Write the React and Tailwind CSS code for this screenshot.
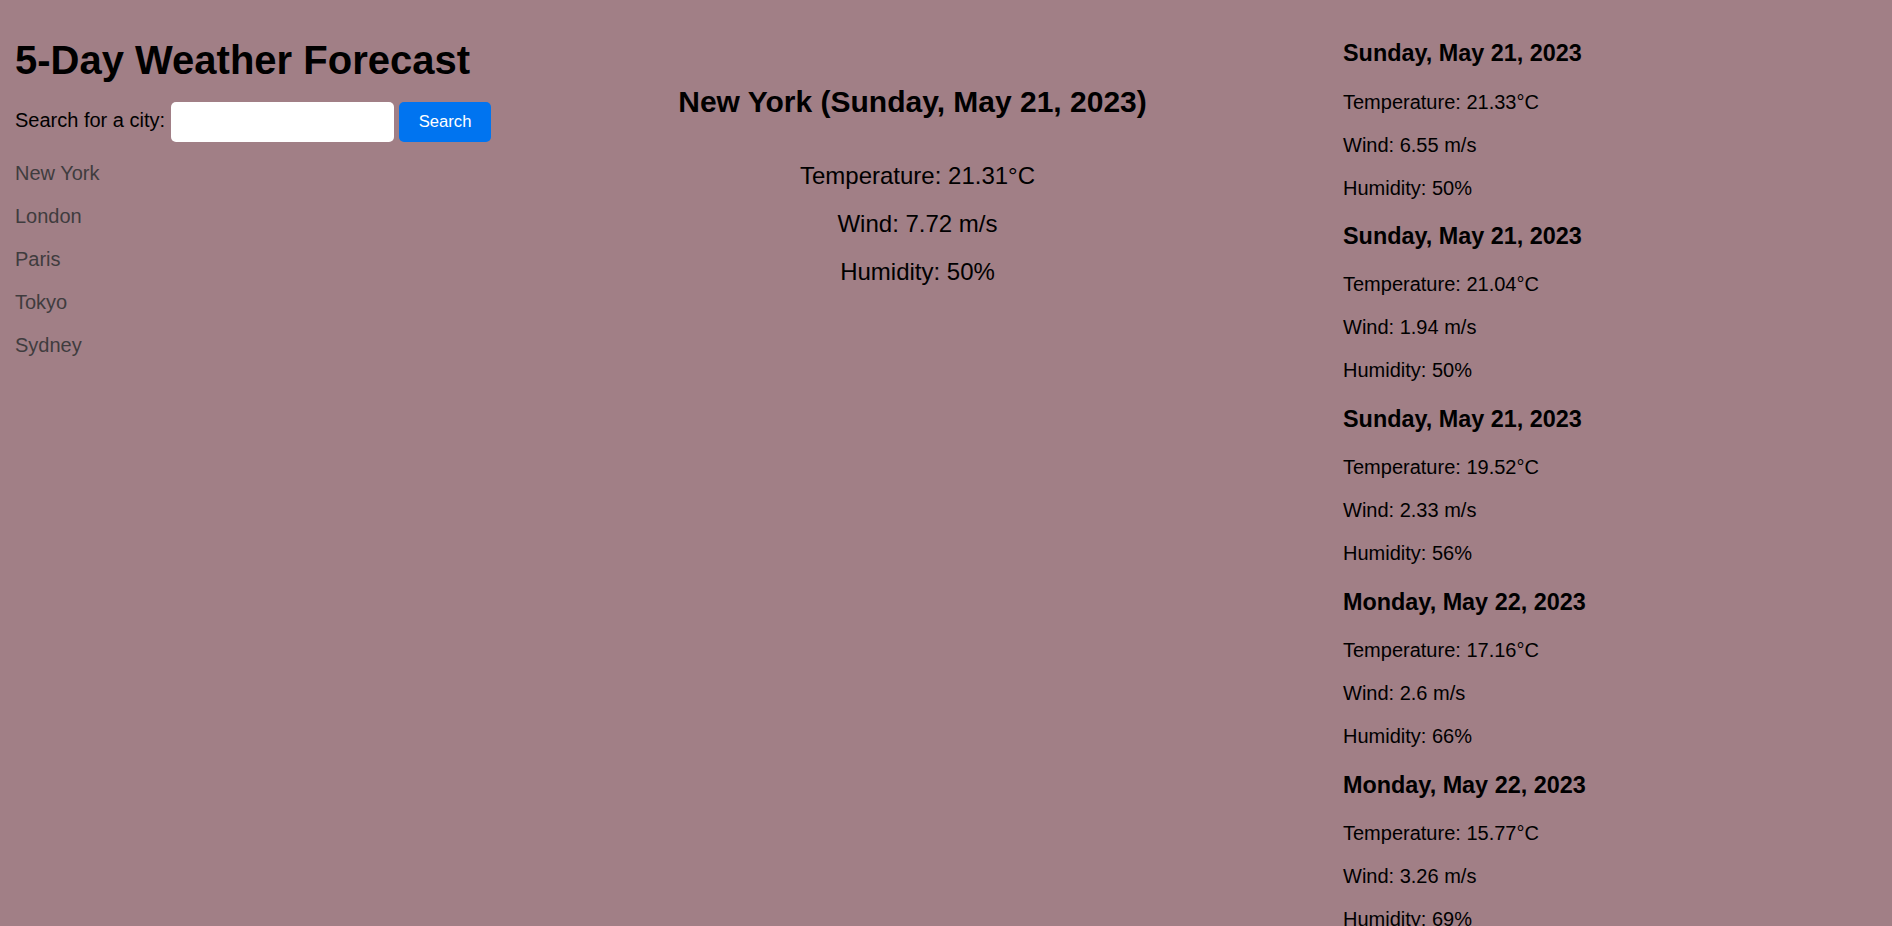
import React from 'react'

const CITIES = ['New York', 'London', 'Paris', 'Tokyo', 'Sydney']

const FORECAST = [
  { date: 'Sunday, May 21, 2023', temp: '21.33', wind: '6.55', humidity: 50 },
  { date: 'Sunday, May 21, 2023', temp: '21.04', wind: '1.94', humidity: 50 },
  { date: 'Sunday, May 21, 2023', temp: '19.52', wind: '2.33', humidity: 56 },
  { date: 'Monday, May 22, 2023', temp: '17.16', wind: '2.6', humidity: 66 },
  { date: 'Monday, May 22, 2023', temp: '15.77', wind: '3.26', humidity: 69 },
]

export default function App() {
  return (
    <div
      className="h-[926px] overflow-hidden bg-[#a17f86] text-black"
      style={{ fontFamily: '"Liberation Sans", Arial, sans-serif' }}
    >
      <div className="flex items-start px-[15px]">
        {/* search + history */}
        <div className="w-[477px] shrink-0 pt-[37px]">
          <h1 className="text-[40px] font-bold leading-[46px]">5-Day Weather Forecast</h1>
          <form className="mt-[19px] flex h-[40px] items-center" onSubmit={(e) => e.preventDefault()}>
            <label htmlFor="city" className="mb-[4px] text-[20px] leading-[23px]">Search for a city:</label>
            <input id="city" type="text" className="ml-[6px] h-[40px] w-[223px] rounded-[5px] bg-white px-2 text-[20px] outline-none" />
            <button type="submit" className="ml-[5px] flex h-[40px] w-[92px] items-center justify-center rounded-[5px] bg-[#0074f0] pb-[2px] text-[16.67px] text-white">
              Search
            </button>
          </form>
          <ul className="mt-[20px] flex flex-col gap-[20px]">
            {CITIES.map((c) => (
              <li key={c} className="text-[20px] leading-[23px] text-[#3f3c3e]">{c}</li>
            ))}
          </ul>
        </div>

        {/* current weather */}
        <div className="w-[846px] shrink-0 pt-[85px] text-center">
          <h2 className="pr-[5px] text-[30px] font-bold leading-[34px]">New York (Sunday, May 21, 2023)</h2>
          <div className="mt-[43px] flex flex-col gap-[20px] pl-[5px] text-[24px] leading-[28px]">
            <p>Temperature: 21.31°C</p>
            <p>Wind: 7.72 m/s</p>
            <p>Humidity: 50%</p>
          </div>
        </div>

        {/* forecast list */}
        <div className="ml-[5px] flex flex-1 flex-col gap-[23.4px] pt-[40px]">
          {FORECAST.map((f, i) => (
            <div key={i} className="flex flex-col">
              <h3 className="mb-[23.5px] text-[23.4px] font-bold leading-[27px]">{f.date}</h3>
              <div className="flex flex-col gap-[20px] text-[20px] leading-[23px]">
                <p>Temperature: {f.temp}°C</p>
                <p>Wind: {f.wind} m/s</p>
                <p>Humidity: {f.humidity}%</p>
              </div>
            </div>
          ))}
        </div>
      </div>
    </div>
  )
}
